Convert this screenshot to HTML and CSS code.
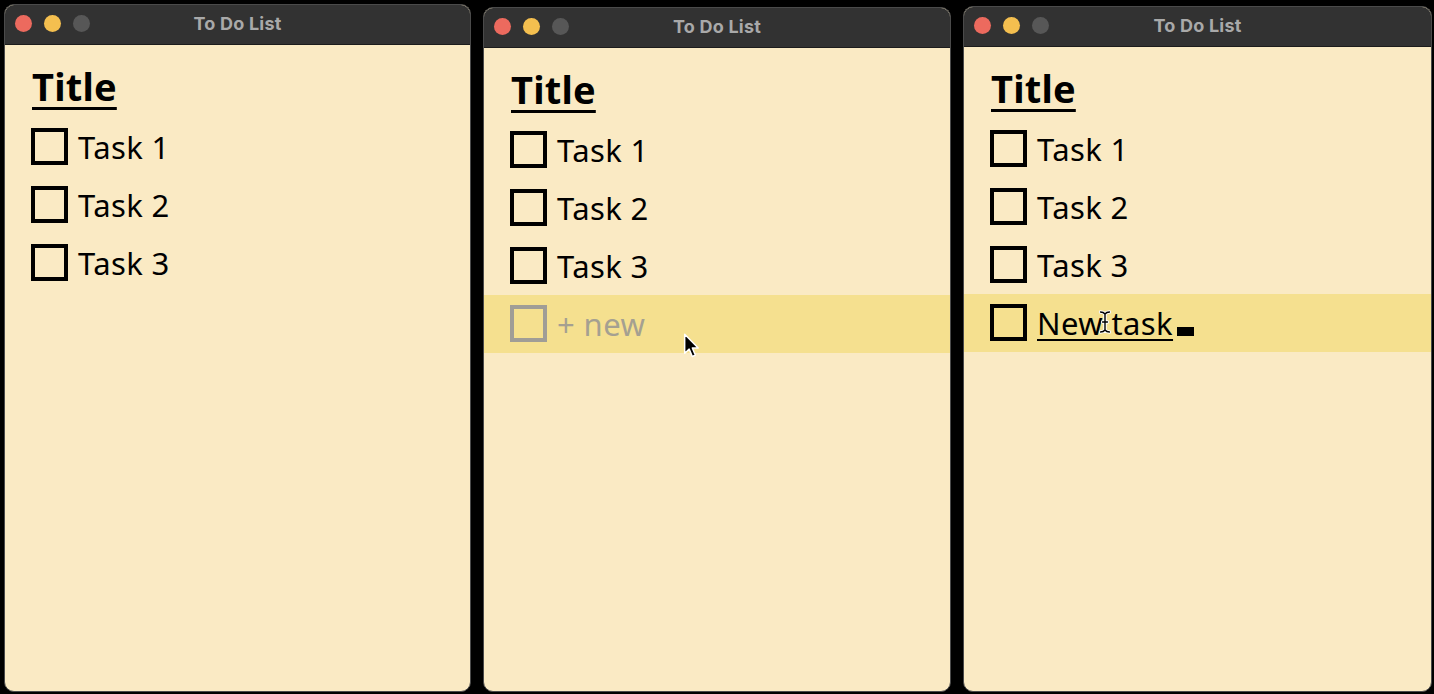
FILE: index.html
```html
<!DOCTYPE html>
<html>
<head>
<meta charset="utf-8">
<link rel="stylesheet" href="styles.css">
</head>
<body>
<div class="desk">
  <div class="win win-a">
    <div class="titlebar">
      <div class="lights"><span class="light red"></span><span class="light yellow"></span><span class="light grey"></span></div>
      <div class="wtitle">To Do List</div>
    </div>
    <div class="content">
      <h1 class="title">Title</h1>
      <div class="row"><span class="box"></span><span class="label">Task 1</span></div>
      <div class="row"><span class="box"></span><span class="label">Task 2</span></div>
      <div class="row"><span class="box"></span><span class="label">Task 3</span></div>
    </div>
  </div>

  <div class="win win-b">
    <div class="titlebar">
      <div class="lights"><span class="light red"></span><span class="light yellow"></span><span class="light grey"></span></div>
      <div class="wtitle">To Do List</div>
    </div>
    <div class="content">
      <h1 class="title">Title</h1>
      <div class="row"><span class="box"></span><span class="label">Task 1</span></div>
      <div class="row"><span class="box"></span><span class="label">Task 2</span></div>
      <div class="row"><span class="box"></span><span class="label">Task 3</span></div>
      <div class="row row-hl row-new"><span class="box box-dim"></span><span class="label label-dim">+ new</span></div>
    </div>
    <svg class="cursor-arrow" width="18" height="28" viewBox="0 0 16 24">
      <path d="M1.5 1.5 L1.5 18.5 L5.5 14.8 L8.3 21.3 L11 20.1 L8.3 13.8 L13.5 13.8 Z" fill="#000" stroke="#fff" stroke-width="1.3" stroke-linejoin="round"/>
    </svg>
  </div>

  <div class="win win-c">
    <div class="titlebar">
      <div class="lights"><span class="light red"></span><span class="light yellow"></span><span class="light grey"></span></div>
      <div class="wtitle">To Do List</div>
    </div>
    <div class="content">
      <h1 class="title">Title</h1>
      <div class="row"><span class="box"></span><span class="label">Task 1</span></div>
      <div class="row"><span class="box"></span><span class="label">Task 2</span></div>
      <div class="row"><span class="box"></span><span class="label">Task 3</span></div>
      <div class="row row-hl"><span class="box"></span><span class="label"><span class="editing">New task</span><span class="caret"></span></span></div>
    </div>
    <svg class="cursor-ibeam" width="14" height="24" viewBox="0 0 14 24">
      <path d="M2.5 2 Q5.5 2 7 4 Q8.5 2 11.5 2 M7 4 L7 20 M2.5 22 Q5.5 22 7 20 Q8.5 22 11.5 22 M4.5 12 L9.5 12" fill="none" stroke="#fff" stroke-width="3.4" stroke-linecap="round"/>
      <path d="M2.5 2 Q5.5 2 7 4 Q8.5 2 11.5 2 M7 4 L7 20 M2.5 22 Q5.5 22 7 20 Q8.5 22 11.5 22 M4.5 12 L9.5 12" fill="none" stroke="#000" stroke-width="1.4" stroke-linecap="round"/>
    </svg>
  </div>
</div>
</body>
</html>
```

FILE: styles.css
```css
* { box-sizing: border-box; }
html, body { margin: 0; padding: 0; background: #000; }
body { width: 1434px; height: 694px; overflow: hidden; }

.desk {
  display: flex;
  align-items: stretch;
  gap: 12px;
  height: 694px;
  padding: 0 0 2px 4px;
}

.win {
  position: relative;
  display: flex;
  flex-direction: column;
  background: #faeac4;
  border: 1px solid #4a4a4a;
  border-radius: 10px;
  overflow: hidden;
}
.win-a { width: 467px; margin-top: 4px; }
.win-b { width: 468px; margin-top: 7px; }
.win-c { width: 469px; margin-top: 6px; }

.titlebar {
  position: relative;
  height: 40px;
  flex: 0 0 40px;
  background: #323232;
  border-bottom: 1px solid #1c1c1c;
  display: flex;
  align-items: center;
  justify-content: center;
  padding-bottom: 2px;
}
.lights {
  position: absolute;
  left: 10px;
  top: 10px;
  display: flex;
  gap: 12px;
}
.light {
  width: 17px;
  height: 17px;
  border-radius: 50%;
  display: block;
}
.red { background: #ec6a5e; }
.yellow { background: #f4bf4f; }
.grey { background: #575757; }

.wtitle {
  font-family: Inter, "Liberation Sans", sans-serif;
  font-weight: 700;
  font-size: 18px;
  color: #a9a9a9;
  letter-spacing: 0.2px;
}

.content {
  flex: 1;
  padding-top: 15px;
  font-family: "Noto Sans", "Open Sans", sans-serif;
  color: #000;
}

.title {
  margin: 0 0 6px 27px;
  font-size: 38px;
  line-height: 52px;
  font-weight: 700;
  text-decoration: underline;
  text-decoration-thickness: 3px;
  text-underline-offset: 6px;
  letter-spacing: 0.2px;
}

.row {
  height: 58px;
  display: flex;
  align-items: center;
  padding-left: 26px;
  padding-bottom: 1px;
}
.row-hl { background: #f5e08f; }

.box {
  width: 37px;
  height: 37px;
  border: 4px solid #000;
  flex: 0 0 37px;
}
.box-dim { border-color: #a09d96; }

.label {
  margin-left: 10px;
  font-size: 31px;
  line-height: 58px;
  white-space: nowrap;
  letter-spacing: 0.4px;
}
.label-dim { color: #a5a091; }

.editing {
  text-decoration: underline;
  text-decoration-thickness: 2px;
  text-underline-offset: 4px;
}
.caret {
  display: inline-block;
  width: 17px;
  height: 9px;
  margin-left: 4px;
  background: #000;
  vertical-align: -1px;
}

.cursor-arrow {
  position: absolute;
  left: 199px;
  top: 324px;
}
.cursor-ibeam {
  position: absolute;
  left: 134px;
  top: 303px;
}
```
